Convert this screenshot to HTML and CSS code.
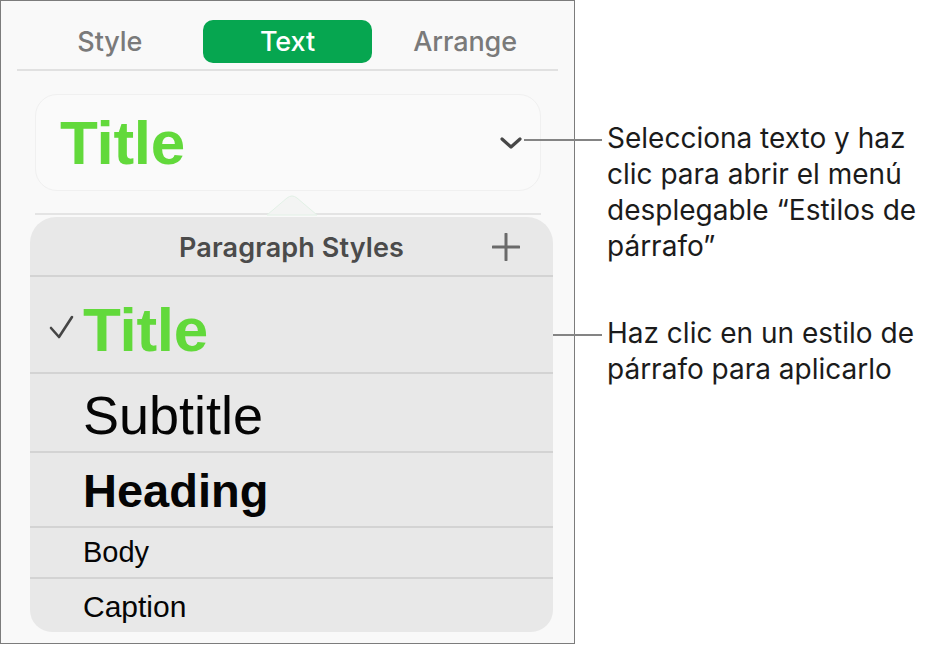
FILE: index.html
```html
<!DOCTYPE html>
<html lang="es">
<head>
<meta charset="utf-8">
<title>Paragraph Styles</title>
<link rel="stylesheet" href="styles.css">
</head>
<body>
<div class="page">
  <div class="panel">
    <div class="tabs">
      <div class="tab">Style</div>
      <div class="tab active">Text</div>
      <div class="tab">Arrange</div>
    </div>
    <div class="sep top-sep"></div>
    <div class="style-card">
      <span class="card-title">Title</span>
      <svg class="chevron" width="24" height="14" viewBox="0 0 24 14"><polyline points="3,3 12,11 21,3" fill="none" stroke="#474747" stroke-width="3.2" stroke-linecap="round" stroke-linejoin="round"/></svg>
    </div>
    <div class="sep mid-sep">
      <svg class="pointer" width="52" height="22" viewBox="0 0 52 22"><path d="M0 21 L20 4 Q25 0 30 4 L50 21 Z" fill="#f3f4f3" stroke="#e2f1e6" stroke-width="1"/></svg>
    </div>
    <div class="popover">
      <div class="pop-head">
        <span></span>
        <span class="pop-title">Paragraph Styles</span>
        <svg class="plus" width="28" height="28" viewBox="0 0 28 28"><path d="M14 1 V27 M1 14 H27" stroke="#6a6a6a" stroke-width="3" stroke-linecap="round"/></svg>
      </div>
      <div class="row row-title">
        <span class="check"><svg width="25" height="24" viewBox="0 0 25 24"><path d="M2 13 L10 22 L23 2" fill="none" stroke="#454545" stroke-width="2.6" stroke-linecap="round" stroke-linejoin="round"/></svg></span>
        <span class="s-title">Title</span>
      </div>
      <div class="row row-subtitle"><span class="check"></span><span class="s-subtitle">Subtitle</span></div>
      <div class="row row-heading"><span class="check"></span><span class="s-heading">Heading</span></div>
      <div class="row row-body"><span class="check"></span><span class="s-body">Body</span></div>
      <div class="row row-caption"><span class="check"></span><span class="s-caption">Caption</span></div>
    </div>
  </div>
  <div class="notes">
    <p class="note note-one">Selecciona texto y haz<br>clic para abrir el menú<br>desplegable “Estilos de<br>párrafo”</p>
    <p class="note note-two">Haz clic en un estilo de<br>párrafo para aplicarlo</p>
  </div>
</div>
</body>
</html>
```

FILE: styles.css
```css
* { box-sizing: border-box; }
html, body { margin: 0; padding: 0; background: #ffffff; }
body { font-family: Inter, "Noto Sans", sans-serif; }

.page {
  display: flex;
  align-items: flex-start;
}

.panel {
  width: 575px;
  height: 644px;
  border: 1px solid #7c7c7c;
  background: #f9f9f9;
  display: flex;
  flex-direction: column;
  flex: none;
}

.tabs {
  display: grid;
  grid-template-columns: repeat(3, 1fr);
  padding: 19px 20px 0;
}
.tab {
  height: 43px;
  line-height: 43px;
  text-align: center;
  font-size: 27px;
  font-weight: 500;
  color: #7a7a7a;
  letter-spacing: -0.1px;
}
.tab.active {
  background: #06a650;
  color: #ffffff;
  border-radius: 10px;
  margin: 0 4px;
}

.sep {
  height: 2px;
  background: #e1e1e1;
}
.top-sep { margin: 6px 16px 0; }

.style-card {
  margin: 23px 33px 0 34px;
  height: 97px;
  border: 1px solid #f0f0f0;
  border-radius: 22px;
  background: #fafafa;
  display: flex;
  justify-content: space-between;
  align-items: center;
  padding: 0 17px 0 24px;
}
.card-title {
  font-family: "Liberation Sans", Arial, sans-serif;
  font-weight: 700;
  font-size: 62px;
  line-height: 1;
  color: #62d93b;
  align-self: flex-start;
  margin-top: 17px;
  letter-spacing: -0.3px;
}
.chevron { display: block; }

.mid-sep {
  margin: 22px 33px 0 34px;
  position: relative;
  background: #e4e4e4;
}
.pointer {
  position: absolute;
  left: 232px;
  top: -19px;
}

.popover {
  margin: 2px 21px 0 29px;
  background: #e8e8e8;
  border-radius: 26px 26px 22px 22px;
  overflow: hidden;
}

.pop-head {
  height: 58px;
  display: grid;
  grid-template-columns: 1fr auto 1fr;
  align-items: start;
  padding: 0 33px;
}
.pop-title {
  font-size: 27px;
  font-weight: 600;
  color: #4b4b4b;
  line-height: 1;
  padding-top: 17px;
  letter-spacing: 0.1px;
}
.plus {
  justify-self: end;
  margin-top: 16px;
}

.row {
  display: flex;
  align-items: flex-start;
  border-top: 2px solid #d3d3d3;
  padding-left: 20px;
  font-family: "Liberation Sans", Arial, sans-serif;
  line-height: 1;
  color: #050505;
}
.check {
  width: 33px;
  flex: none;
}
.check svg { display: block; margin-top: 16px; margin-left: -1px; }

.row-title { height: 97px; padding-top: 22px; }
.row-subtitle { height: 79px; padding-top: 14px; }
.row-heading { height: 75px; padding-top: 14px; }
.row-body { height: 51px; padding-top: 10px; }
.row-caption { height: 55px; padding-top: 13px; }

.s-title { font-size: 62px; font-weight: 700; color: #62d93b; letter-spacing: -0.3px; }
.s-subtitle { font-size: 54px; font-weight: 400; letter-spacing: 0; }
.s-heading { font-size: 47px; font-weight: 700; letter-spacing: 0; }
.s-body { font-size: 29px; font-weight: 400; }
.s-caption { font-size: 30px; font-weight: 400; }

.notes {
  margin-left: 32px;
  padding-top: 120px;
  display: flex;
  flex-direction: column;
}
.note {
  position: relative;
  margin: 0;
  font-size: 28px;
  line-height: 36px;
  color: #1b1b1b;
  letter-spacing: 0;
}
.note::before {
  content: "";
  position: absolute;
  top: 19px;
  height: 2px;
  background: #848484;
}
.note-one::before { left: -83px; width: 78px; }
.note-two { margin-top: 51px; }
.note-two::before { left: -54px; width: 49px; }
```
